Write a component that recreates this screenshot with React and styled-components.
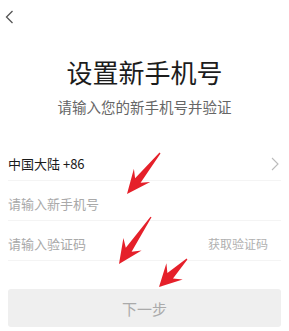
import React from 'react';
import styled, { createGlobalStyle } from 'styled-components';

const GlobalStyle = createGlobalStyle`
  html, body {
    margin: 0;
    padding: 0;
    background: #ffffff;
  }
  body {
    font-family: "Noto Sans CJK SC", "Noto Sans", sans-serif;
  }
`;

// red annotation arrows drawn over the screenshot
const arrows = [
  { tail: [160, 153], tip: [127, 194], head: 24, width: 21, shaft: 7 },
  { tail: [151, 217], tip: [119, 264], head: 24, width: 22, shaft: 7 },
  { tail: [187, 259], tip: [159, 287], head: 22, width: 23, shaft: 8 },
];

const arrowPoints = ({ tail, tip, head, width, shaft }) => {
  const dx = tip[0] - tail[0];
  const dy = tip[1] - tail[1];
  const len = Math.hypot(dx, dy);
  const ux = dx / len;
  const uy = dy / len;
  const nx = -uy;
  const ny = ux;
  const at = (d, off) => [tip[0] - ux * d + nx * off, tip[1] - uy * d + ny * off];
  const pts = [
    [tail[0] + nx * 0.6, tail[1] + ny * 0.6],
    at(head * 0.72, shaft / 2),
    at(head, width / 2),
    tip,
    at(head, -width / 2),
    at(head * 0.72, -shaft / 2),
    [tail[0] - nx * 0.6, tail[1] - ny * 0.6],
  ];
  return pts.map((p) => p.map((v) => v.toFixed(1)).join(',')).join(' ');
};

const App = () => (
  <Page>
    <GlobalStyle />
    <TopBar>
      <IconButton aria-label="back">
        <svg width="9" height="14" viewBox="0 0 9 14">
          <path d="M7.5 1 L1.5 7 L7.5 13" fill="none" stroke="#555" strokeWidth="1.3" />
        </svg>
      </IconButton>
    </TopBar>

    <Heading>
      <Title>设置新手机号</Title>
      <Subtitle>请输入您的新手机号并验证</Subtitle>
    </Heading>

    <Form>
      <Row>
        <RowText>中国大陆 +86</RowText>
        <svg width="8" height="14" viewBox="0 0 8 14">
          <path d="M1 1 L7 7 L1 13" fill="none" stroke="#bbb" strokeWidth="1.1" />
        </svg>
      </Row>
      <Row>
        <RowText muted>请输入新手机号</RowText>
      </Row>
      <Row>
        <RowText muted>请输入验证码</RowText>
        <CodeLink>获取验证码</CodeLink>
      </Row>
    </Form>

    <NextButton disabled>下一步</NextButton>

    <Overlay viewBox="0 0 289 331" width="289" height="331">
      {arrows.map((a, i) => (
        <polygon key={i} points={arrowPoints(a)} fill="#e5202a" />
      ))}
    </Overlay>
  </Page>
);

export default App;

const Page = styled.div`
  position: relative;
  width: 289px;
  height: 331px;
  overflow: hidden;
  background: #fff;
`;

const TopBar = styled.div`
  height: 34px;
  display: flex;
  align-items: center;
  padding-left: 4px;
`;

const IconButton = styled.div`
  display: flex;
  align-items: center;
  justify-content: center;
  width: 10px;
  height: 14px;
  margin-top: -1px;
`;

const Heading = styled.div`
  display: flex;
  flex-direction: column;
  align-items: center;
  margin-top: 22px;
`;

const Title = styled.h1`
  margin: 0;
  font-size: 26px;
  line-height: 31px;
  font-weight: 400;
  color: #1c1c1c;
`;

const Subtitle = styled.p`
  margin: 10px 0 0;
  font-size: 14.5px;
  line-height: 20px;
  color: #666;
`;

const Form = styled.div`
  margin-top: 24px;
  padding: 0 8px;
`;

const Row = styled.div`
  display: flex;
  align-items: center;
  justify-content: space-between;
  height: 33px;
  padding-top: 6px;
  padding-right: 2px;
  border-bottom: 1px solid #f4f4f4;
`;

const RowText = styled.span`
  font-size: 13px;
  color: ${(p) => (p.muted ? '#a9a9a9' : '#1a1a1a')};
`;

const CodeLink = styled.span`
  font-size: 12px;
  color: #b0b0b0;
  margin-right: 11px;
`;

const NextButton = styled.button`
  display: flex;
  align-items: center;
  justify-content: center;
  width: 273px;
  height: 38px;
  margin: 28px 0 0 8px;
  border: none;
  border-radius: 3px;
  background: #efefef;
  color: #aaa;
  font-family: "Noto Sans CJK SC", sans-serif;
  font-size: 15px;
  padding: 0;
`;

const Overlay = styled.svg`
  position: absolute;
  left: 0;
  top: 0;
  pointer-events: none;
`;
